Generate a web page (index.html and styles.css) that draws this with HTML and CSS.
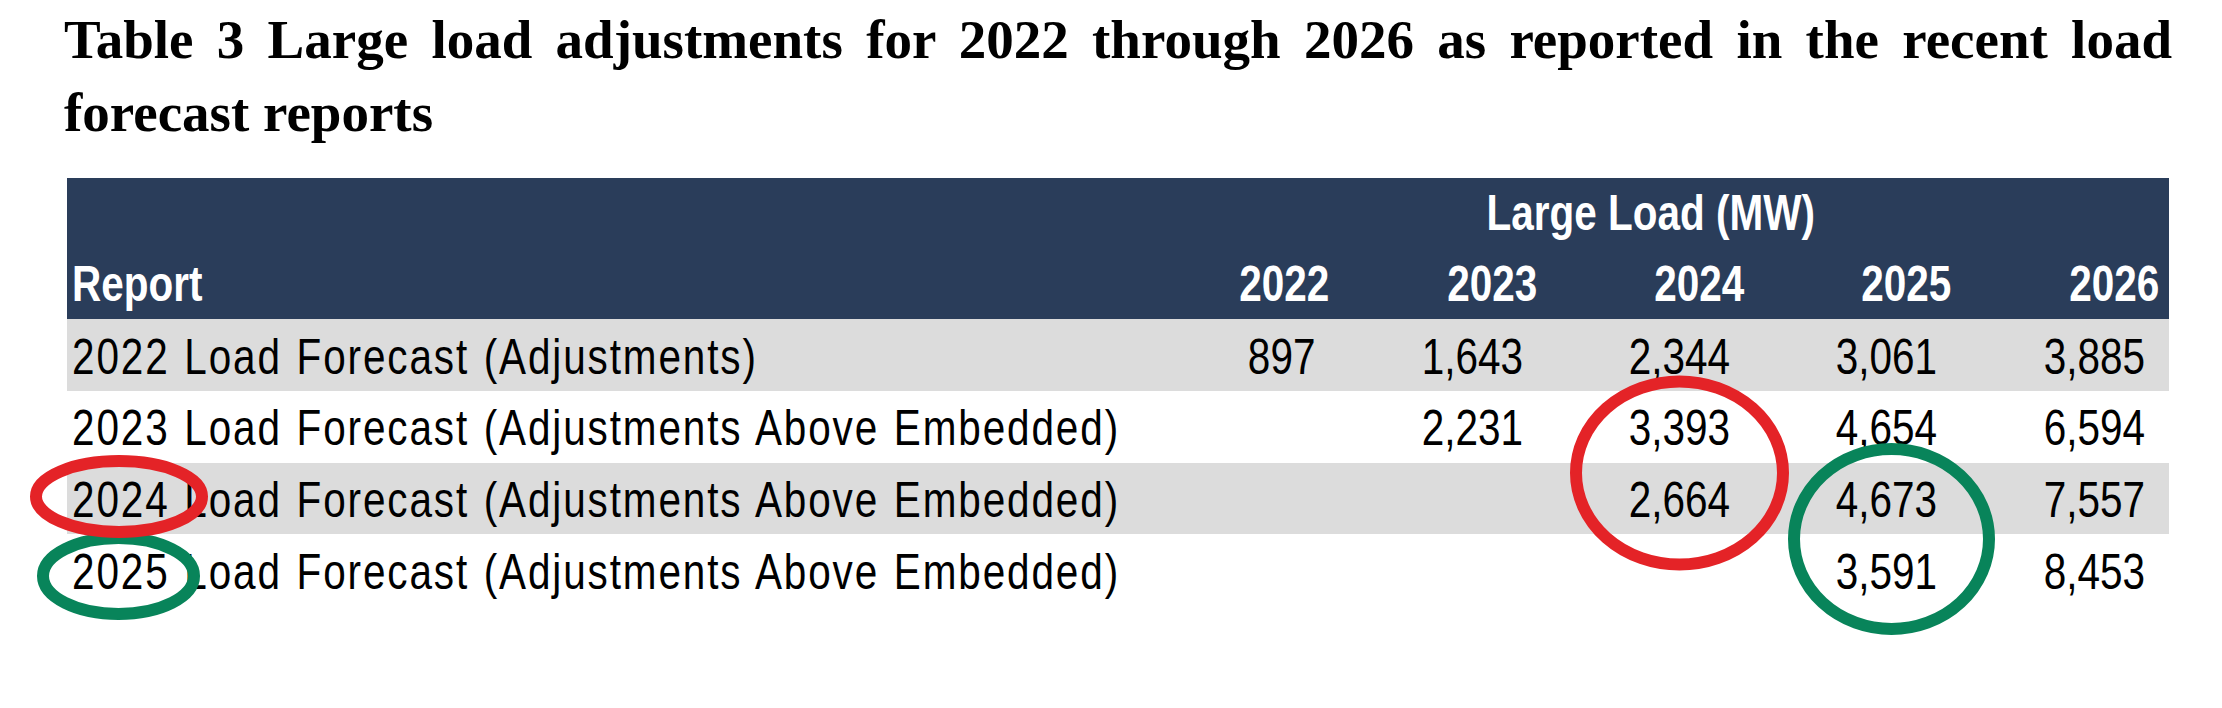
FILE: index.html
```html
<!DOCTYPE html>
<html lang="en">
<head>
<meta charset="utf-8">
<title>Table 3 Large load adjustments</title>
<link rel="stylesheet" href="styles.css">
</head>
<body>
<div class="page">
  <h1 class="title">Table 3 Large load adjustments for 2022 through 2026 as reported in the recent load forecast reports</h1>
  <table class="load-table">
    <colgroup>
      <col class="c-report">
      <col class="c-year"><col class="c-year"><col class="c-year"><col class="c-year"><col class="c-year">
    </colgroup>
    <thead>
      <tr class="head-top">
        <th></th>
        <th colspan="5" class="group"><span class="nx c">Large Load (MW)</span></th>
      </tr>
      <tr class="head-bottom">
        <th class="lbl"><span class="nx l">Report</span></th>
        <th class="yr"><span class="nx r">2022</span></th>
        <th class="yr"><span class="nx r">2023</span></th>
        <th class="yr"><span class="nx r">2024</span></th>
        <th class="yr"><span class="nx r">2025</span></th>
        <th class="yr"><span class="nx r">2026</span></th>
      </tr>
    </thead>
    <tbody>
      <tr class="alt">
        <td class="lbl"><span class="nx l label">2022 Load Forecast (Adjustments)</span></td>
        <td class="num"><span class="nx r">897</span></td>
        <td class="num"><span class="nx r">1,643</span></td>
        <td class="num"><span class="nx r">2,344</span></td>
        <td class="num"><span class="nx r">3,061</span></td>
        <td class="num"><span class="nx r">3,885</span></td>
      </tr>
      <tr>
        <td class="lbl"><span class="nx l label">2023 Load Forecast (Adjustments Above Embedded)</span></td>
        <td class="num"></td>
        <td class="num"><span class="nx r">2,231</span></td>
        <td class="num"><span class="nx r">3,393</span></td>
        <td class="num"><span class="nx r">4,654</span></td>
        <td class="num"><span class="nx r">6,594</span></td>
      </tr>
      <tr class="alt">
        <td class="lbl"><span class="nx l label">2024 Load Forecast (Adjustments Above Embedded)</span></td>
        <td class="num"></td>
        <td class="num"></td>
        <td class="num"><span class="nx r">2,664</span></td>
        <td class="num"><span class="nx r">4,673</span></td>
        <td class="num"><span class="nx r">7,557</span></td>
      </tr>
      <tr>
        <td class="lbl"><span class="nx l label">2025 Load Forecast (Adjustments Above Embedded)</span></td>
        <td class="num"></td>
        <td class="num"></td>
        <td class="num"></td>
        <td class="num"><span class="nx r">3,591</span></td>
        <td class="num"><span class="nx r">8,453</span></td>
      </tr>
    </tbody>
  </table>
</div>
<svg class="marks" width="2222" height="708" viewBox="0 0 2222 708" aria-hidden="true">
  <ellipse class="ring green" cx="118.5" cy="576" rx="75.5" ry="38"/>
  <ellipse class="ring red" cx="119" cy="496.5" rx="83" ry="35.5"/>
  <ellipse class="ring green" cx="1891.5" cy="539" rx="97.5" ry="90"/>
  <ellipse class="ring red" cx="1679.5" cy="473" rx="103.5" ry="91.5"/>
</svg>
</body>
</html>
```

FILE: styles.css
```css
html, body {
  margin: 0;
  padding: 0;
  background: #ffffff;
}

body {
  position: relative;
  width: 2222px;
  height: 708px;
  overflow: hidden;
}

.page {
  padding: 2.5px 0 0 64px;
}

.title {
  margin: 0;
  width: 2108px;
  font-family: "Liberation Serif", "Times New Roman", serif;
  font-weight: 700;
  font-size: 55px;
  line-height: 73px;
  text-align: justify;
  color: #000;
}

.load-table {
  margin: 29.5px 0 0 3px;
  width: 2102px;
  border-collapse: collapse;
  border-spacing: 0;
  table-layout: fixed;
  font-family: "Liberation Sans", Arial, sans-serif;
  font-size: 50px;
  color: #000;
}

.c-report { width: 1065px; }
.c-year { width: 207.4px; }

.load-table th,
.load-table td {
  padding: 0;
  white-space: nowrap;
  vertical-align: top;
}

.load-table thead th {
  background: #2a3d5a;
  color: #ffffff;
  font-weight: 700;
}

.head-top th {
  line-height: 70px;
}

.head-top .group {
  text-align: center;
}

.head-bottom th {
  padding-top: 3.35px;
  line-height: 67.65px;
}

.head-bottom .lbl {
  text-align: left;
  padding-left: 5px;
}

.head-bottom .yr {
  text-align: right;
  padding-right: 10px;
}

.load-table tbody td {
  padding-top: 4.5px;
  line-height: 67.3px;
  background: #ffffff;
}

.load-table tbody tr.alt td {
  background: #dcdcdc;
}

.load-table tbody .lbl {
  text-align: left;
  padding-left: 5px;
}

.load-table tbody .num {
  text-align: right;
  padding-right: 24px;
}

.nx {
  display: inline-block;
  white-space: nowrap;
  transform: scaleX(0.81);
}

.nx.l { transform-origin: left center; }
.nx.r { transform-origin: right center; }
.nx.c { transform-origin: center center; }

.label {
  letter-spacing: 2.3px;
  word-spacing: 2px;
}

.marks {
  position: absolute;
  left: 0;
  top: 0;
  pointer-events: none;
}

.ring {
  fill: none;
  stroke-width: 12;
}

.ring.red { stroke: #e42327; }
.ring.green { stroke: #08845a; }
```
